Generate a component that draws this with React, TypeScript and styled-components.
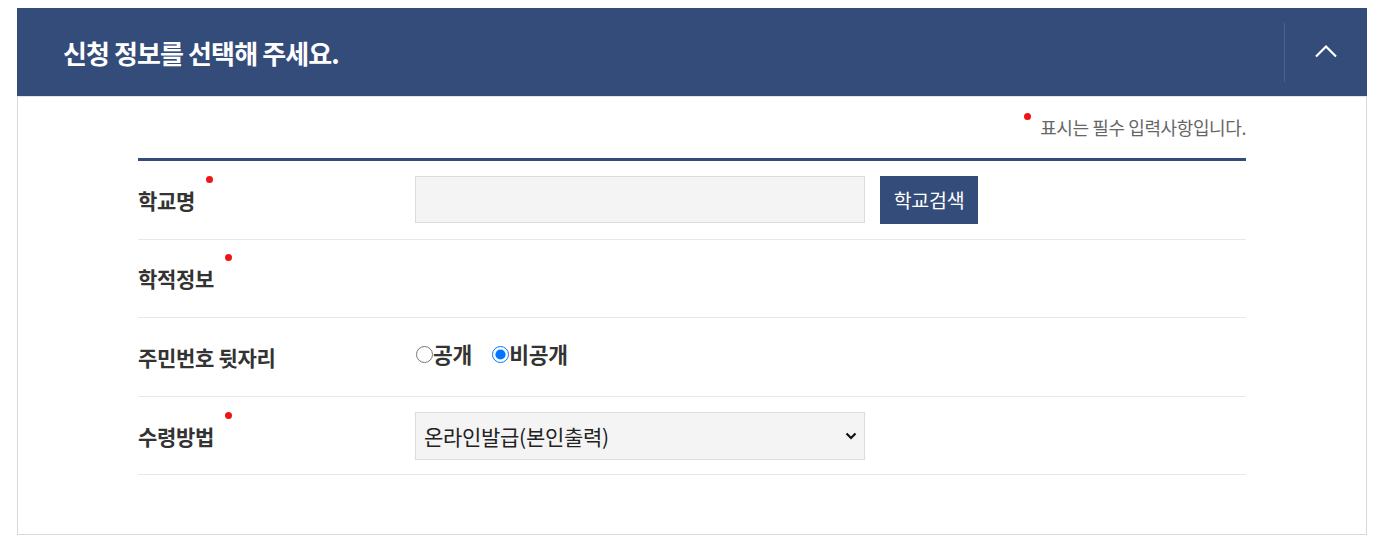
import styled, { createGlobalStyle } from 'styled-components'

const GlobalStyle = createGlobalStyle`
  body {
    margin: 8px 11px 4px 17px;
    background: #fff;
    font-family: "Noto Sans CJK KR", "Noto Sans", sans-serif;
    color: #333;
  }
`

const Panel = styled.section`
  width: 1350px;
`

const Header = styled.header`
  display: flex;
  align-items: center;
  height: 88px;
  background: #344c7a;
  color: #fff;
`

const Title = styled.h2`
  flex: 1;
  margin: 0;
  padding-left: 46px;
  font-size: 26px;
  font-weight: 700;
  letter-spacing: -0.9px;
`

const ToggleButton = styled.button`
  display: flex;
  align-items: center;
  justify-content: center;
  width: 83px;
  height: 59px;
  margin-top: 1px;
  padding: 0 0 4px;
  border: 0;
  border-left: 1px solid #4a6291;
  background: transparent;
  cursor: pointer;
`

const Body = styled.div`
  padding: 19px 120px 59px;
  border: 1px solid #d9d9d9;
  border-top-color: #e3e3e3;
`

const Note = styled.p`
  display: flex;
  justify-content: flex-end;
  margin: 0 0 19px;
  font-size: 18px;
  line-height: 23px;
  color: #666;
  letter-spacing: -0.4px;
`

const NoteText = styled.span`
  position: relative;
  &::before {
    content: '';
    position: absolute;
    left: -16px;
    top: -3px;
    width: 7px;
    height: 7px;
    border-radius: 50%;
    background: #f01515;
  }
`

const Table = styled.div`
  border-top: 3px solid #344c7a;
`

const Row = styled.div`
  display: flex;
  align-items: center;
  height: 78.6px;
  border-bottom: 1px solid #e8e8e8;
  box-sizing: border-box;
`

const LabelCell = styled.div`
  width: 277px;
  flex-shrink: 0;
`

const Label = styled.span<{ $required?: boolean }>`
  position: relative;
  font-size: 21px;
  font-weight: 700;
  color: #333;
  letter-spacing: -0.3px;
  &::after {
    content: '';
    display: ${(p) => (p.$required ? 'block' : 'none')};
    position: absolute;
    right: -18px;
    top: -9px;
    width: 7px;
    height: 7px;
    border-radius: 50%;
    background: #f01515;
  }
`

const ValueCell = styled.div`
  display: flex;
  align-items: center;
  flex: 1;
`

const TextInput = styled.input`
  width: 450px;
  height: 47px;
  box-sizing: border-box;
  border: 1px solid #dcdcdc;
  background: #f4f4f4;
  font: inherit;
`

const SearchButton = styled.button`
  margin-left: 15px;
  width: 98px;
  height: 48px;
  padding: 0;
  border: 0;
  background: #344c7a;
  color: #fff;
  font-family: "Noto Sans CJK KR", sans-serif;
  font-size: 19.5px;
  letter-spacing: -0.3px;
  cursor: pointer;
`

const RadioLabel = styled.label`
  display: flex;
  align-items: center;
  margin-right: 19px;
  margin-top: -6px;
  font-size: 21.5px;
  font-weight: 700;
  color: #333;
  letter-spacing: -0.2px;
`

const Radio = styled.input`
  width: 17px;
  height: 17px;
  margin: 2px 0 0 1px;
`

const SelectWrap = styled.div`
  position: relative;
`

const Select = styled.select`
  display: block;
  width: 450px;
  height: 48px;
  box-sizing: border-box;
  padding: 0 30px 0 8px;
  border: 1px solid #dcdcdc;
  border-radius: 0;
  background: #f4f4f4;
  color: #222;
  font-family: "Noto Sans CJK KR", sans-serif;
  font-size: 21px;
  letter-spacing: -0.3px;
  appearance: none;
`

const SelectArrow = styled.svg`
  position: absolute;
  right: 8px;
  top: 20px;
  pointer-events: none;
`

function App() {
  return (
    <>
      <GlobalStyle />
      <Panel>
        <Header>
          <Title>신청 정보를 선택해 주세요.</Title>
          <ToggleButton aria-label="접기">
            <svg width="24" height="14" viewBox="0 0 24 14">
              <polyline points="2,12.5 12,2.5 22,12.5" fill="none" stroke="#fff" strokeWidth="2.2" />
            </svg>
          </ToggleButton>
        </Header>
        <Body>
          <Note>
            <NoteText>표시는 필수 입력사항입니다.</NoteText>
          </Note>
          <Table>
            <Row>
              <LabelCell><Label $required>학교명</Label></LabelCell>
              <ValueCell>
                <TextInput type="text" readOnly />
                <SearchButton>학교검색</SearchButton>
              </ValueCell>
            </Row>
            <Row>
              <LabelCell><Label $required>학적정보</Label></LabelCell>
              <ValueCell />
            </Row>
            <Row>
              <LabelCell><Label>주민번호 뒷자리</Label></LabelCell>
              <ValueCell>
                <RadioLabel><Radio type="radio" name="rrn" />공개</RadioLabel>
                <RadioLabel><Radio type="radio" name="rrn" defaultChecked />비공개</RadioLabel>
              </ValueCell>
            </Row>
            <Row>
              <LabelCell><Label $required>수령방법</Label></LabelCell>
              <ValueCell>
                <SelectWrap>
                  <Select defaultValue="online">
                    <option value="online">온라인발급(본인출력)</option>
                    <option value="post">우편발송</option>
                  </Select>
                  <SelectArrow width="12" height="8" viewBox="0 0 12 8">
                    <polyline points="1.5,1.5 6,6 10.5,1.5" fill="none" stroke="#111" strokeWidth="2.2" />
                  </SelectArrow>
                </SelectWrap>
              </ValueCell>
            </Row>
          </Table>
        </Body>
      </Panel>
    </>
  )
}

export default App
